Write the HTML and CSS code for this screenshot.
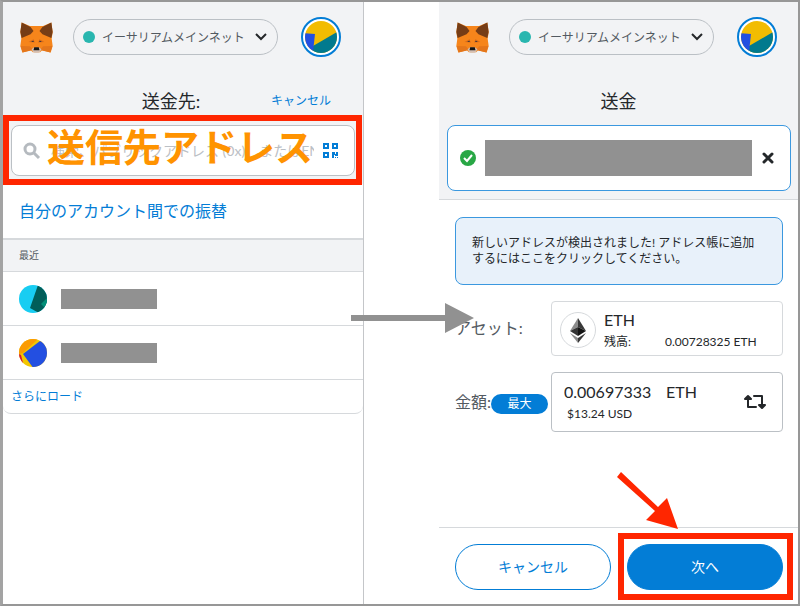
FILE: index.html
```html
<!DOCTYPE html>
<html lang="ja">
<head>
  <meta charset="UTF-8" />
  <meta name="viewport" content="width=device-width, initial-scale=1.0"/>
  <title>MetaMask | 送金</title>
  <link rel="stylesheet" href="styles.css">
</head>
<body>
  <!-- shared drawings -->
  <svg class="defs" aria-hidden="true">
    <symbol id="fox" viewBox="0 0 100 93">
      <path fill="#f6851b" d="M5 1L30 12h40L95 1l4 29-3 20 3 22-6 20-26-7-6 6H39l-6-6-26 7-6-20 3-22L1 30z"/>
      <path fill="#763d16" d="M5 1l27 14 9 12-9 10-27 11-4-18zM95 1L68 15l-9 12 9 10 27 11 4-18z"/>
      <path fill="#e4761b" d="M2 72l28 1 8 10-5 3-25 6zM98 72l-28 1-8 10 5 3 25 6z"/>
      <path fill="#d5691c" d="M26 60l15-8 4 10zM74 60l-15-8-4 10z"/>
      <path fill="#4a3a35" d="M34 58l7-2 1 4h-5zM66 58l-7-2-1 4h5z"/>
      <path fill="#d5bfb2" d="M35 82l7-5h16l7 5-4 7-5 4H44l-5-4z"/>
      <path fill="#161616" d="M43 76h14l2 9H41z"/>
    </symbol>
    <symbol id="account" viewBox="0 0 40 40">
      <circle cx="20" cy="20" r="19" fill="#fff" stroke="#037dd6" stroke-width="2"/>
      <clipPath id="account-clip"><circle cx="20" cy="20" r="16"/></clipPath>
      <g clip-path="url(#account-clip)">
        <path fill="#f2bc02" d="M0 0h40v40H0z"/>
        <path fill="#017a8e" d="M12 29l24-14 4 25H11z"/>
        <path fill="#234fe1" d="M2 16l12 1-2 18-10 2z"/>
      </g>
    </symbol>
  </svg>

  <main class="frame">
    <section class="panel panel-to">
      <header class="app-header">
        <svg class="fox"><use href="#fox"/></svg>
        <div class="network">
          <span class="dot"></span>
          <select aria-label="ネットワーク"><option>イーサリアムメインネット</option></select>
          <svg class="chevron" viewBox="0 0 12 8"><path d="M1 1l5 5 5-5"/></svg>
        </div>
        <button class="account" type="button" aria-label="アカウント"><svg><use href="#account"/></svg></button>
      </header>
      <div class="title-row">
        <h2>送金先:</h2>
        <a class="cancel-link" href="#">キャンセル</a>
      </div>
      <div class="search-wrap">
        <div class="search">
          <svg class="search-icon" viewBox="0 0 16 16"><circle cx="6" cy="6" r="5"/><path d="M10 10l5 5"/></svg>
          <input type="text" aria-label="検索" placeholder="検索、パブリックアドレス (0x)、またはENS">
          <button type="button" class="qr" aria-label="QRコード">
            <svg viewBox="0 0 15 15">
              <path class="qr-box" d="M1 1h4v4H1zM10 1h4v4h-4zM1 10h4v4H1z"/>
              <path class="qr-dots" d="M9 9h3v2h1V9h2v4h-3v-1h-1v3H9zM12 14h1v1h-1zM14 14h1v1h-1z"/>
            </svg>
          </button>
        </div>
        <div class="highlight"></div>
        <strong class="callout">送信先アドレス</strong>
      </div>
      <a class="own-accounts" href="#">自分のアカウント間での振替</a>
      <div class="recent">
        <h3>最近</h3>
        <ul>
          <li>
            <svg class="avatar" viewBox="0 0 28 28">
              <clipPath id="avatar-clip"><circle cx="14" cy="14" r="14"/></clipPath>
              <g clip-path="url(#avatar-clip)">
                <path fill="#18cdf2" d="M0 0h28v28H0z"/>
                <path fill="#015e59" d="M19 0l9 4v24h-8l-9-5z"/>
                <path fill="#028f78" d="M28 13l-6 6 4 4 4-4z"/>
              </g>
            </svg>
            <span class="masked"></span>
          </li>
          <li>
            <svg class="avatar" viewBox="0 0 28 28">
              <g clip-path="url(#avatar-clip)">
                <path fill="#f2c602" d="M0 0h28v28H0z"/>
                <path fill="#fb9b02" d="M0 0h19L4 14l-4 1z"/>
                <path fill="#234fe1" d="M4 15L21 2l9 4v24H15z"/>
                <path fill="#d3163b" d="M0 15l2 1 2 8-4 1z"/>
              </g>
            </svg>
            <span class="masked"></span>
          </li>
        </ul>
        <a class="load-more" href="#">さらにロード</a>
      </div>
    </section>

    <div class="between">
      <svg class="step-arrow" viewBox="0 0 123 30"><path d="M0 12h94V0l29 15-29 15V18H0z"/></svg>
    </div>

    <section class="panel panel-send">
      <div class="top">
        <header class="app-header">
          <svg class="fox"><use href="#fox"/></svg>
          <div class="network">
            <span class="dot"></span>
            <select aria-label="ネットワーク"><option>イーサリアムメインネット</option></select>
            <svg class="chevron" viewBox="0 0 12 8"><path d="M1 1l5 5 5-5"/></svg>
          </div>
          <button class="account" type="button" aria-label="アカウント"><svg><use href="#account"/></svg></button>
        </header>
        <div class="title-row"><h2>送金</h2></div>
        <div class="recipient">
          <svg class="check" viewBox="0 0 16 16"><circle cx="8" cy="8" r="8"/><path d="M4 8l3 3 5-6"/></svg>
          <span class="masked"></span>
          <button type="button" aria-label="削除"><svg viewBox="0 0 14 14"><path d="M3 3l8 8M11 3l-8 8"/></svg></button>
        </div>
      </div>

      <div class="form">
        <a class="notice" href="#">新しいアドレスが検出されました! アドレス帳に追加するにはここをクリックしてください。</a>
        <div class="row">
          <span class="label">アセット:</span>
          <div class="asset">
            <span class="eth">
              <svg viewBox="0 0 16 25">
                <path fill="#8c8c8c" d="M8 0L0 13l8-4z"/>
                <path fill="#393939" d="M8 0l8 13-8-4z"/>
                <path fill="#343434" d="M0 13l8-4v9z"/>
                <path fill="#141414" d="M16 13L8 9v9z"/>
                <path fill="#8c8c8c" d="M0 15l8 5v5z"/>
                <path fill="#393939" d="M16 15l-8 5v5z"/>
              </svg>
            </span>
            <div class="asset-text">
              <div class="asset-name">ETH</div>
              <div class="balance"><span>残高:</span><span>0.00728325 ETH</span></div>
            </div>
          </div>
        </div>
        <div class="row">
          <div class="amount-label">
            <label class="label" for="amount">金額:</label>
            <button type="button" class="max">最大</button>
          </div>
          <div class="amount">
            <div>
              <div class="amount-value"><input id="amount" type="text" value="0.00697333"><span>ETH</span></div>
              <div class="fiat">$13.24 USD</div>
            </div>
            <button type="button" class="swap" aria-label="通貨の切り替え">
              <svg viewBox="0 0 22 16"><path d="M1 5l3-3 3 3zM4 3v10h8M10 2h8v11M15 11l3 3 3-3z"/></svg>
            </button>
          </div>
        </div>
      </div>

      <footer>
        <button type="button" class="btn">キャンセル</button>
        <div class="next">
          <button type="button" class="btn btn-primary">次へ</button>
          <div class="highlight"></div>
          <svg class="next-arrow" viewBox="0 0 61 58"><path d="M4 0l37 35 9-9 11 31-32-9 9-9L0 5z"/></svg>
        </div>
      </footer>
    </section>
  </main>
</body>
</html>
```

FILE: styles.css
```css
* {
  box-sizing: border-box;
}
body {
  margin: 0;
  background: #fff;
  color: #24272a;
  font-family: Lato, "Noto Sans CJK JP", sans-serif;
  font-size: 12px;
}
button,
input,
select {
  font-family: inherit;
  color: inherit;
  background: none;
  border: none;
  padding: 0;
  margin: 0;
}
button {
  cursor: pointer;
}
a {
  color: #037dd6;
  text-decoration: none;
}
svg {
  display: block;
}
h2,
h3,
ul {
  margin: 0;
  padding: 0;
  font-weight: normal;
}
.defs {
  position: absolute;
  width: 0;
  height: 0;
}
.frame {
  display: grid;
  grid-template-columns: 361fr 75fr 359fr;
  min-height: 100vh;
  border: 2px solid #979797;
  border-left: 3px solid #a3a3a3;
}
.panel {
  display: flex;
  flex-direction: column;
  min-width: 0;
}
.panel-to {
  border-right: 1px solid #c4c6c9;
  background: linear-gradient(#f2f3f5 182px, #fff 182px);
}

/* header */
.app-header {
  display: flex;
  align-items: center;
  padding: 15px 21px 15px 17px;
}
.panel-to .app-header {
  padding-right: 22px;
}
.fox {
  width: 33px;
  height: 31px;
}
.network {
  flex: 1;
  display: flex;
  align-items: center;
  gap: 7px;
  height: 36px;
  margin: 0 23px 0 20px;
  padding: 0 10px 0 9px;
  border: 1px solid #bbc0c5;
  border-radius: 18px;
}
.dot {
  width: 12px;
  height: 12px;
  border-radius: 50%;
  background: #29b6af;
}
.network select {
  flex: 1;
  min-width: 0;
  appearance: none;
  font-size: 12px;
  color: #535a61;
}
.chevron {
  width: 12px;
  height: 8px;
  fill: none;
  stroke: #24272a;
  stroke-width: 2;
}
.account svg {
  width: 40px;
  height: 40px;
}
.title-row {
  display: grid;
  grid-template-columns: 1fr auto 1fr;
  align-items: center;
  height: 53px;
  padding: 4px 32px 0 8px;
}
.title-row h2 {
  grid-column: 2;
  font-size: 18px;
  line-height: 24px;
}
.cancel-link {
  justify-self: end;
  padding-bottom: 2px;
}
.panel-send .title-row {
  padding: 4px 16px 0;
}

/* recipient search */
.search-wrap {
  position: relative;
  padding: 0 8px 9px;
}
.search {
  display: flex;
  align-items: center;
  height: 51px;
  padding: 0 16px 0 12px;
  border: 1px solid #bbc0c5;
  border-radius: 8px;
  background: #fff;
}
.search-icon {
  width: 16px;
  height: 16px;
  fill: none;
  stroke: #b5babf;
  stroke-width: 3;
  overflow: visible;
}
.search input {
  flex: 1;
  min-width: 0;
  margin: 0 9px 0 11px;
  font-size: 14px;
  outline: none;
}
.search input::placeholder {
  color: #bbc0c5;
}
.qr svg {
  width: 15px;
  height: 15px;
}
.qr-box {
  fill: none;
  stroke: #037dd6;
  stroke-width: 2;
}
.qr-dots {
  fill: #037dd6;
}
.highlight {
  position: absolute;
  inset: -10px 1px 0 0;
  border: 6px solid #ff2600;
  pointer-events: none;
}
.callout {
  position: absolute;
  top: -7px;
  left: 44px;
  font-size: 38px;
  line-height: 56px;
  color: #ff9300;
  white-space: nowrap;
  pointer-events: none;
}
.own-accounts {
  padding: 14px 16px 15px;
  font-size: 16px;
  line-height: 24px;
}

/* recent list */
.recent {
  border-bottom: 1px solid #d6d9dc;
  border-radius: 0 0 8px 8px;
}
.recent h3 {
  padding: 7px 16px 8px;
  border-top: 2px solid #d6d9dc;
  border-bottom: 1px solid #d6d9dc;
  background: #f2f3f5;
  font-size: 10px;
  line-height: 16px;
  color: #535a61;
}
.recent ul {
  list-style: none;
}
.recent li {
  display: flex;
  align-items: center;
  gap: 14px;
  height: 54px;
  padding: 0 16px;
  border-bottom: 1px solid #d6d9dc;
}
.avatar {
  width: 28px;
  height: 28px;
}
.masked {
  background: #919191;
}
.recent .masked {
  width: 96px;
  height: 20px;
}
.load-more {
  display: block;
  padding: 8px;
  line-height: 17px;
}

.between {
  position: relative;
}
.step-arrow {
  position: absolute;
  top: 301px;
  left: -13px;
  width: 123px;
  fill: #919191;
}

/* send form */
.top {
  background: #f2f3f5;
  border-bottom: 1px solid #d6d9dc;
  padding-bottom: 8px;
}
.recipient {
  display: flex;
  align-items: center;
  gap: 9px;
  height: 66px;
  margin: 0 7px 0 8px;
  padding: 0 15px 0 12px;
  border: 1px solid #3b98df;
  border-radius: 8px;
  background: #fff;
}
.check {
  width: 16px;
  height: 16px;
  fill: #28a745;
}
.check path {
  fill: none;
  stroke: #fff;
  stroke-width: 2;
}
.recipient .masked {
  flex: 1;
  height: 36px;
}
.recipient button svg {
  width: 14px;
  height: 14px;
  stroke: #24272a;
  stroke-width: 3;
  stroke-linecap: round;
}
.form {
  flex: 1;
  display: flex;
  flex-direction: column;
  gap: 16px;
  padding: 17px 15px 16px 16px;
}
.notice {
  padding: 17px 16px;
  border: 1px solid #3b98df;
  border-radius: 8px;
  background: #e8f1fa;
  line-height: 16px;
  color: #24272a;
}
.row {
  display: grid;
  grid-template-columns: 96fr 232fr;
  align-items: center;
}
.label {
  padding-bottom: 3px;
  font-size: 16px;
  color: #535a61;
}
.asset,
.amount {
  display: flex;
  align-items: center;
  border: 1px solid #d6d9dc;
  border-radius: 4px;
}
.asset {
  height: 55px;
  gap: 8px;
  padding: 3px 8px 0;
}
.eth {
  display: flex;
  align-items: center;
  justify-content: center;
  width: 36px;
  height: 36px;
  border: 1px solid #d6d9dc;
  border-radius: 50%;
}
.eth svg {
  width: 16px;
  height: 25px;
}
.asset-name {
  font-size: 16px;
  line-height: 24px;
}
.balance {
  display: flex;
  gap: 34px;
  line-height: 20px;
}
.amount-label {
  display: flex;
  align-items: center;
}
.max {
  flex: 1;
  height: 20px;
  margin: 3px 3px 0 0;
  border-radius: 10px;
  background: #037dd6;
  color: #fff;
  font-size: 12px;
  line-height: 20px;
}
.amount {
  justify-content: space-between;
  height: 60px;
  padding: 0 16px 0 12px;
  border-color: #bbc0c5;
}
.amount-value {
  display: flex;
  gap: 10px;
  font-size: 16px;
  line-height: 24px;
}
.amount-value input {
  width: 92px;
  height: 23px;
  font-size: 16px;
}
.fiat {
  padding-left: 3px;
  line-height: 20px;
}
.swap svg {
  width: 22px;
  height: 16px;
  fill: none;
  stroke: #24272a;
  stroke-width: 2;
  stroke-linecap: round;
  stroke-linejoin: round;
}

/* footer */
footer {
  display: grid;
  grid-template-columns: 1fr 1fr;
  gap: 16px;
  padding: 16px 15px 14px 16px;
  border-top: 1px solid #d6d9dc;
}
.btn {
  width: 100%;
  height: 46px;
  padding-bottom: 3px;
  border: 1px solid #037dd6;
  border-radius: 23px;
  color: #037dd6;
  font-size: 14px;
}
.btn-primary {
  background: #037dd6;
  color: #fff;
}
.next {
  position: relative;
}
.next .highlight {
  inset: -11px -10px -10px -9px;
}
.next-arrow {
  position: absolute;
  top: -72px;
  left: -10px;
  width: 61px;
  fill: #ff2600;
  pointer-events: none;
}
```
